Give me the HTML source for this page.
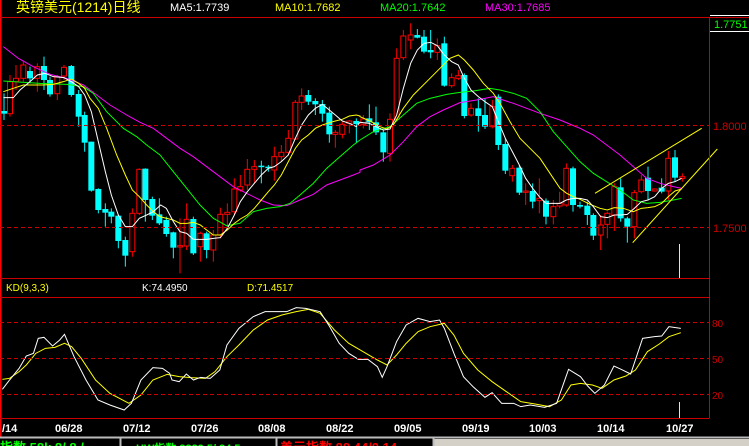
<!DOCTYPE html>
<html><head><meta charset="utf-8"><style>
html,body{margin:0;padding:0;background:#000;width:749px;height:446px;overflow:hidden}
#c{position:absolute;left:0;top:0}
</style></head><body>
<svg id="c" width="749" height="446" xmlns="http://www.w3.org/2000/svg" font-family="Liberation Sans, Noto Sans CJK SC, sans-serif">
<rect width="749" height="446" fill="#000"/>
<g id="g"></g>
<line x1="0.5" y1="0" x2="0.5" y2="437" stroke="#f00" stroke-width="2"/>
<line x1="0" y1="17.5" x2="749" y2="17.5" stroke="#c00"/>
<line x1="0" y1="278.5" x2="709" y2="278.5" stroke="#c00"/>
<line x1="0" y1="297.5" x2="709" y2="297.5" stroke="#c00"/>
<line x1="0" y1="418.5" x2="709" y2="418.5" stroke="#c00"/>
<line x1="709.5" y1="17" x2="709.5" y2="418" stroke="#c00"/>
<line x1="0" y1="125.5" x2="709" y2="125.5" stroke="#c00" stroke-dasharray="4,3"/>
<line x1="0" y1="227.5" x2="709" y2="227.5" stroke="#c00" stroke-dasharray="4,3"/>
<line x1="0" y1="322.5" x2="709" y2="322.5" stroke="#c00" stroke-dasharray="4,3"/>
<line x1="0" y1="358.5" x2="709" y2="358.5" stroke="#c00" stroke-dasharray="4,3"/>
<line x1="0" y1="394.5" x2="709" y2="394.5" stroke="#c00" stroke-dasharray="4,3"/>
<text x="16" y="12" fill="#ff0" font-size="14">英镑美元(1214)日线</text>
<text x="170" y="11" fill="#fff" font-size="11">MA5:1.7739</text>
<text x="275" y="11" fill="#ff0" font-size="11">MA10:1.7682</text>
<text x="380" y="11" fill="#0f0" font-size="11">MA20:1.7642</text>
<text x="485" y="11" fill="#f0f" font-size="11">MA30:1.7685</text>
<line x1="710" y1="15.5" x2="749" y2="15.5" stroke="#fff"/>
<line x1="710" y1="31.5" x2="749" y2="31.5" stroke="#fff"/>
<text x="714" y="28" fill="#0f0" font-size="11">1.7751</text>
<text x="713" y="130" fill="#c00" font-size="11">1.8000</text>
<text x="713" y="232" fill="#c00" font-size="11">1.7500</text>
<text x="712" y="327" fill="#c00" font-size="10">80</text>
<text x="712" y="363" fill="#c00" font-size="10">50</text>
<text x="712" y="399" fill="#c00" font-size="10">20</text>
<text x="6" y="291" fill="#ff0" font-size="10">KD(9,3,3)</text>
<text x="142" y="291" fill="#fff" font-size="10">K:74.4950</text>
<text x="247" y="291" fill="#ff0" font-size="10">D:71.4517</text>
<g fill="#fff" font-size="11" font-weight="bold" font-family="Liberation Sans, sans-serif">
<text x="2" y="432">/14</text><text x="55" y="432">06/28</text><text x="123" y="432">07/12</text>
<text x="191" y="432">07/26</text><text x="258" y="432">08/08</text><text x="326" y="432">08/22</text>
<text x="394" y="432">09/05</text><text x="462" y="432">09/19</text><text x="529" y="432">10/03</text>
<text x="597" y="432">10/14</text><text x="666" y="432">10/27</text>
</g>
<rect x="0" y="437" width="749" height="9" fill="#000"/>
<line x1="0" y1="437.5" x2="749" y2="437.5" stroke="#bbb" stroke-width="2"/>
<rect x="434" y="439" width="315" height="7" fill="#d4d0c8"/>
<line x1="120.5" y1="438" x2="120.5" y2="446" stroke="#bbb" stroke-width="2"/>
<line x1="276.5" y1="438" x2="276.5" y2="446" stroke="#bbb" stroke-width="2"/>
<line x1="433.5" y1="438" x2="433.5" y2="446" stroke="#bbb" stroke-width="2"/>
<g font-size="13" font-weight="bold">
<text x="0" y="452" fill="#0f0">指数 58k 8/ 8 /</text>
<text x="136" y="452" fill="#0f0" font-size="11">HW指数 3329.5/ 34.5</text>
<text x="280" y="452" fill="#f00">美元指数 88.44/0.14</text>
</g>
</svg>
<script>
var NS="http://www.w3.org/2000/svg",G=document.getElementById('g');
function el(n,a){var e=document.createElementNS(NS,n);for(var k in a)e.setAttribute(k,a[k]);G.appendChild(e);return e;}
var A=[[12,0,288,296,235,315],[30,1,200,296,180,305],[48,1,190,200,150,225],[70,1,150,190,140,200],[90,0,168,190,155,205],[112,1,155,190,145,230],[132,0,153,195,125,225],[150,0,195,238,185,245],[172,1,185,236,180,255],[192,1,157,183,150,195],[214,0,153,240,150,245],[236,0,237,305,225,335],[254,0,300,383,290,410],[274,0,380,527,380,530],[295,0,522,585,520,595],[316,0,582,593,565,635],[334,0,590,605,580,625],[355,0,602,678,600,700],[376,0,675,722,665,755],[397,1,595,710,580,725],[418,1,463,595,460,600],[436,0,461,555,460,620],[457,0,552,602,545,615],[478,0,598,625,550,630],[499,0,615,657,605,665],[520,0,652,698,650,730],[540,1,692,696,610,775],[560,1,613,693,565,705],[580,0,612,715,605,720],[601,1,655,695,650,740],[620,0,655,705,650,730],[640,1,660,705,645,740],[661,1,598,660,578,670],[682,1,592,598,565,645],[703,1,522,590,490,600],[721,1,515,525,480,530],[742,1,463,510,432,525],[763,1,455,463,435,505],[784,0,452,455,437,505],[805,0,455,458,450,470],[823,1,425,465,395,497],[844,1,412,425,390,440],[865,1,370,412,345,420],[886,1,262,372,255,375],[905,1,243,262,220,285],[925,0,240,260,225,270],[946,0,258,268,250,300],[967,0,267,296,255,320],[988,0,293,358,275,383],[1006,1,352,358,345,398],[1027,1,328,358,320,370],[1048,1,318,325,315,355],[1069,0,318,327,310,385]];
var B=[[10,1,312,328,300,340],[28,0,310,322,268,345],[48,0,322,352,275,360],[70,0,352,412,345,440],[90,1,313,415,295,440],[110,1,130,313,100,320],[130,1,63,128,45,135],[152,1,60,75,25,103],[172,0,60,68,42,70],[192,0,65,110,45,115],[212,0,105,112,45,130],[232,1,92,112,70,135],[253,0,85,212,65,215],[275,1,188,212,175,218],[295,1,182,190,165,195],[313,0,180,303,175,310],[333,1,280,300,265,305],[355,0,280,303,250,350],[375,0,300,335,250,342],[397,1,275,335,255,340],[415,0,245,390,238,405],[436,0,387,467,370,477],[457,1,460,482,450,500],[478,0,458,533,450,540],[497,1,528,532,505,570],[518,0,528,560,505,580],[538,1,550,557,490,595],[558,0,557,605,550,628],[580,1,575,605,555,628],[599,1,565,573,530,580],[619,1,460,570,445,575],[639,0,460,570,455,590],[660,0,570,575,560,580],[682,0,572,600,560,630],[700,0,600,662,595,675],[722,1,630,660,600,705],[742,1,595,628,590,670],[763,1,515,600,505,648],[782,0,517,610,490,620],[802,0,610,635,605,683],[823,1,533,635,525,670],[844,1,495,530,480,535],[864,0,488,528,455,555],[884,1,522,528,520,530],[905,0,518,530,490,535],[925,1,430,528,408,555],[945,0,427,488,405,500],[967,1,485,490,475,500]];
function cv(d,ox){var X=d[0]/3+ox,f=function(y){return y/3+15;};
 var bt=f(d[2]),bb=f(d[3]),wt=f(d[4]),wb=f(d[5]);
 if(d[1]){el('line',{x1:X,y1:wt,x2:X,y2:bt,stroke:'#f00'});el('line',{x1:X,y1:bb,x2:X,y2:wb,stroke:'#f00'});
  el('rect',{x:X-2.5,y:bt,width:5,height:Math.max(bb-bt,1),fill:'#000',stroke:'#f00','stroke-width':1});}
 else{el('line',{x1:X,y1:wt,x2:X,y2:wb,stroke:'#0ff'});el('rect',{x:X-3,y:bt,width:6,height:Math.max(bb-bt,1.5),fill:'#0ff'});}}
A.forEach(function(d){cv(d,0)});B.forEach(function(d){cv(d,360)});
function pl(a,b,col){var s=[];for(var i=0;i<a.length;i+=2)s.push((a[i]/3)+','+(a[i+1]/3+15));for(i=0;i<b.length;i+=2)s.push((b[i]/3+360)+','+(b[i+1]/3+15));
 el('polyline',{points:s.join(' '),fill:'none',stroke:col,'stroke-width':1});}
pl([10,95,55,130,100,155,150,178,200,190,250,210,290,240,330,270,380,300,420,322,460,340,500,370,540,400,580,425,620,455,660,485,700,515,740,535,780,555,820,570,860,572,900,555,940,538,980,510,1020,495,1060,480,1080,472],[0,465,40,450,90,420,130,380,170,335,210,305,250,285,300,263,350,255,400,245,420,252,460,265,500,280,540,295,600,315,660,340,700,360,740,390,780,420,820,455,860,490,900,505,940,515,965,520],'#f0f');
pl([10,198,120,205,200,208,250,215,280,235,320,290,370,340,410,365,440,390,480,420,520,470,560,520,600,570,640,610,680,632,720,625,760,590,800,580,840,575,870,565,900,540,940,505,980,460,1020,425,1060,390,1080,375],[0,375,40,350,90,335,130,300,170,265,210,250,260,238,300,232,340,228,390,220,420,225,460,235,500,250,540,290,580,350,620,395,660,440,700,475,740,500,780,525,820,555,860,565,900,562,940,555,965,550],'#0f0');
pl([10,230,40,220,70,210,100,210,130,210,160,208,190,200,214,192,236,205,254,220,270,250,295,280,320,340,350,420,376,480,397,525,418,545,440,570,460,590,480,605,500,610,520,615,540,625,560,625,580,622,601,630,620,645,640,660,661,660,682,645,703,625,721,612,742,600,763,580,784,555,805,530,823,510,844,480,865,440,886,400,905,375,925,360,946,340,967,330,988,323,1006,318,1027,313,1048,303,1069,300,1080,303],[0,305,30,318,60,335,80,342,100,330,130,280,160,240,200,200,240,160,270,130,295,120,313,135,340,165,370,205,400,235,420,265,450,320,480,370,510,400,540,430,560,460,580,490,600,520,620,535,640,545,660,553,690,568,720,580,742,585,763,578,790,580,820,590,844,580,864,578,884,575,905,565,925,545,945,528,965,522],'#ff0');
pl([10,248,40,248,60,225,90,200,112,180,135,175,160,185,192,188,214,200,236,215,254,240,274,290,295,380,316,470,334,540,355,600,376,635,397,635,418,610,440,600,460,590,482,570,499,580,520,620,540,650,560,655,580,673,601,673,620,673,640,670,661,668,682,640,703,600,721,560,742,530,763,505,784,480,805,460,823,455,844,440,865,420,886,370,905,330,925,300,946,280,967,268,988,285,1006,300,1027,318,1048,325,1069,335],[0,322,28,325,48,335,70,345,90,342,110,300,130,220,152,145,172,105,192,85,212,82,232,92,253,120,275,140,295,150,313,190,333,225,355,245,375,260,397,275,415,320,436,370,457,410,478,450,497,490,518,520,538,545,558,565,580,565,600,565,619,555,639,550,660,550,682,555,700,575,722,605,742,608,763,600,782,600,802,598,823,580,844,560,864,555,884,545,905,520,925,505,945,500,965,490],'#fff');
el('line',{x1:360+705/3,y1:535/3+15,x2:360+1025/3,y2:340/3+15,stroke:'#ff0'});
el('line',{x1:360+818/3,y1:683/3+15,x2:360+1072/3,y2:402/3+15,stroke:'#ff0'});
el('line',{x1:679.5,y1:244,x2:679.5,y2:278,stroke:'#ff0'});
el('line',{x1:679.5,y1:402,x2:679.5,y2:418,stroke:'#ff0'});
function kd(a,col){var s=[];for(var i=0;i<a.length;i+=2)s.push((a[i]/2.093)+','+(a[i+1]/3+270));el('polyline',{points:s.join(' '),fill:'none',stroke:col});}
kd([5,328,20,325,40,305,55,285,75,250,95,235,115,232,135,220,150,230,170,265,200,330,230,370,270,400,295,375,320,330,350,313,375,320,400,323,430,325,450,305,475,260,500,225,530,180,560,150,590,135,620,125,645,118,670,130,700,180,730,220,760,245,790,270,810,285,830,255,850,220,875,185,900,170,930,160,950,195,970,250,1000,300,1030,335,1060,365,1090,395,1120,402,1150,410,1175,390,1195,345,1215,340,1240,345,1260,355,1285,330,1310,318,1330,300,1355,245,1380,222,1400,200,1425,188],'#ff0');
kd([5,358,20,330,40,295,55,258,70,250,80,205,92,202,110,228,125,210,135,193,155,260,180,330,205,390,230,405,260,420,275,400,295,330,320,293,340,295,355,310,360,330,375,335,390,312,405,330,420,322,440,325,460,300,475,225,500,175,530,140,555,125,580,125,600,125,620,113,640,115,670,125,690,170,710,220,730,250,750,268,770,268,790,290,800,322,810,290,830,215,850,165,875,145,900,155,920,150,930,175,950,250,970,320,990,350,1015,382,1030,368,1050,400,1075,400,1090,410,1110,405,1140,412,1165,400,1190,298,1215,320,1230,348,1245,370,1265,345,1285,288,1300,298,1320,312,1345,205,1370,200,1385,198,1400,170,1425,175],'#fff');
</script>
</body></html>
